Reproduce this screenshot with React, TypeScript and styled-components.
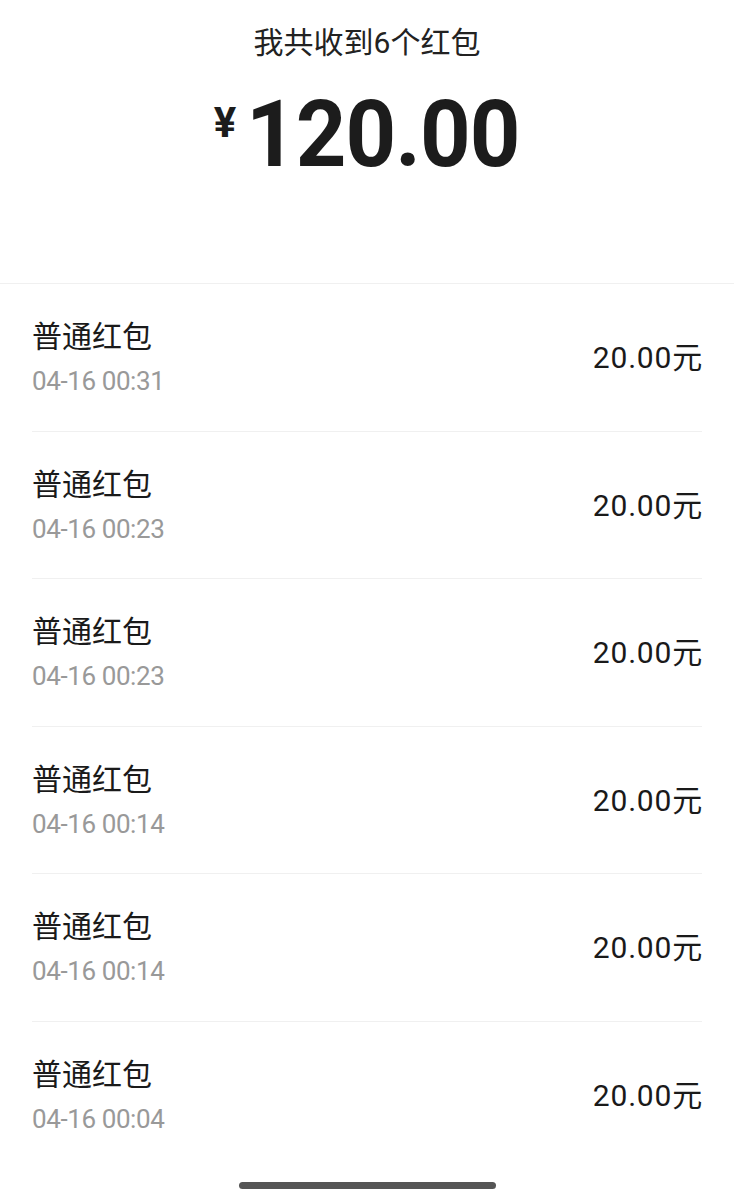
import React from 'react'
import styled, { createGlobalStyle } from 'styled-components'

const GlobalStyle = createGlobalStyle`
  html, body {
    margin: 0;
    padding: 0;
    background: #ffffff;
  }
  body {
    font-family: Roboto, "Noto Sans CJK SC", sans-serif;
    color: #1a1a1a;
  }
`

type Record = { time: string; amount: string }

const records: Record[] = [
  { time: '04-16 00:31', amount: '20.00' },
  { time: '04-16 00:23', amount: '20.00' },
  { time: '04-16 00:23', amount: '20.00' },
  { time: '04-16 00:14', amount: '20.00' },
  { time: '04-16 00:14', amount: '20.00' },
  { time: '04-16 00:04', amount: '20.00' },
]

const App: React.FC = () => {
  return (
    <Page>
      <GlobalStyle />
      <Summary>
        <Title>我共收到6个红包</Title>
        <Total>
          <Currency>¥</Currency>
          <TotalValue>120.00</TotalValue>
        </Total>
      </Summary>
      <List>
        {records.map((r, i) => (
          <Row key={i} $last={i === records.length - 1}>
            <Info>
              <Name>普通红包</Name>
              <Time>{r.time}</Time>
            </Info>
            <Amount>{r.amount}元</Amount>
          </Row>
        ))}
      </List>
      <HomeBar />
    </Page>
  )
}

const Page = styled.div`
  width: 734px;
  height: 1200px;
  display: flex;
  flex-direction: column;
  background: #fff;
  overflow: hidden;
`
const Summary = styled.section`
  height: 284px;
  border-bottom: 1.5px solid #f0f0f0;
  display: flex;
  flex-direction: column;
  align-items: center;
  padding-top: 23px;
  box-sizing: border-box;
`
const Title = styled.div`
  font-size: 30px;
  line-height: 40px;
  color: #222;
`
const Total = styled.div`
  display: flex;
  align-items: flex-start;
  margin-top: 32px;
`
const Currency = styled.span`
  font-size: 42px;
  font-weight: 700;
  line-height: 40px;
  margin-top: 8px;
  margin-right: 10px;
  color: #1c1c1c;
`
const TotalValue = styled.span`
  font-size: 93px;
  font-weight: 700;
  line-height: 80px;
  letter-spacing: -1px;
  color: #1c1c1c;
  transform: scaleX(0.95);
  transform-origin: left center;
  margin-right: -14px;
`
const List = styled.div`
  flex: 1;
  padding: 0 32px;
`
const Row = styled.div<{ $last?: boolean }>`
  height: 147.5px;
  box-sizing: border-box;
  display: flex;
  align-items: center;
  justify-content: space-between;
  border-bottom: ${(p) => (p.$last ? 'none' : '1.5px solid #f0f0f0')};
`
const Info = styled.div`
  display: flex;
  flex-direction: column;
  gap: 10px;
  margin-top: 2px;
`
const Name = styled.div`
  font-size: 30px;
  line-height: 36px;
  color: #1a1a1a;
`
const Time = styled.div`
  font-size: 26px;
  line-height: 32px;
  letter-spacing: -0.4px;
  color: #999;
`
const Amount = styled.div`
  font-size: 30px;
  line-height: 36px;
  letter-spacing: 0.8px;
  color: #1a1a1a;
  margin-top: 2px;
  margin-right: -1px;
`
const HomeBar = styled.div`
  width: 257px;
  height: 7px;
  border-radius: 4px;
  background: #555;
  align-self: center;
  margin-bottom: 11px;
`

export default App
